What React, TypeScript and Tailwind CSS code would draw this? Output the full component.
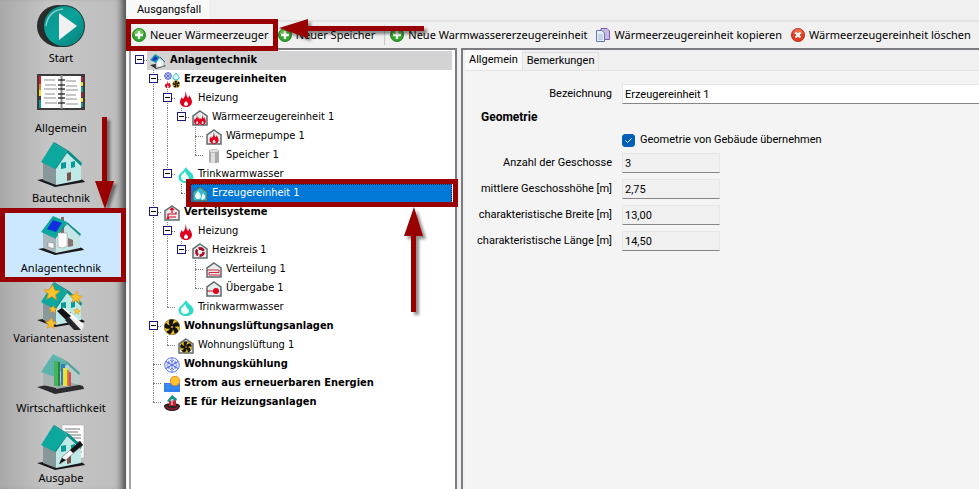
import { useState } from "react";
import type { ReactNode } from "react";

const UI = "font-['Noto_Sans','Open_Sans',sans-serif]";
const TREE = "font-['DejaVu_Sans_Condensed','DejaVu_Sans',sans-serif]";
const FORM = "font-['Roboto','Liberation_Sans',sans-serif]";

/* ---------- sidebar drawings ---------- */

function Big({ children }: { children: ReactNode }) {
  return (
    <svg viewBox="0 0 48 48" className="h-12 w-12 shrink-0" aria-hidden="true">
      {children}
    </svg>
  );
}

function House() {
  return (
    <g>
      <path d="M0 38 18 45 48 40 46 38 30 33Z" fill="#18181c" />
      <path d="M6 20 19 26V43L6 38Z" fill="#87979a" />
      <path d="M30 10 44 23V38L19 43V25Z" fill="#bfe9e7" />
      <path d="M16 1 30 9 18 27 4 20Z" fill="#0ca79d" />
      <path d="M16 1 17 0 32 9 45 21 44 24 30 11 19 27 18 26 30 9Z" fill="#0b8f88" />
      <path d="M24 21 29 20V26L24 27ZM34 20 38 19V25L34 26Z" fill="#079a94" />
      <path d="M30 31 34 30V38L30 39Z" fill="#7a5146" />
    </g>
  );
}

function StartIcon() {
  return (
    <Big>
      <defs>
        <linearGradient id="startFace" x1="0" y1="0" x2="1" y2="1">
          <stop offset="0" stopColor="#0d8f88" />
          <stop offset=".5" stopColor="#0aa39a" />
          <stop offset="1" stopColor="#087f79" />
        </linearGradient>
      </defs>
      <path d="M20 3C8 4 0 13 0 24S9 44 21 45L32 44V4Z" fill="#2b2b2b" />
      <ellipse cx="27" cy="24" rx="21" ry="21" fill="#1d3735" />
      <ellipse cx="27" cy="24" rx="20" ry="20" fill="url(#startFace)" />
      <path d="M9 24C10 14 17 8 26 7" fill="none" stroke="#7fd0cb" strokeWidth="1.500" />
      <path d="M22 11 40 24 22 38Z" fill="#f1f1f1" />
    </Big>
  );
}

function NotebookIcon() {
  const rows = [8, 13, 17, 22, 26, 31];
  return (
    <Big>
      <rect x="0" y="2" width="48" height="36" fill="#3c3c3e" />
      <rect x="4" y="4" width="20" height="32" fill="#fff" />
      <rect x="25" y="4" width="19" height="32" fill="#fff" />
      <path d="M2 4h2v8H2z" fill="#e21b2c" />
      <path d="M2 12h2v6H2z" fill="#f08228" />
      <path d="M2 18h2v6H2z" fill="#f4e11c" />
      <path d="M2 28h2v8H2zM44 15h2v5h-2z" fill="#10a090" />
      <path d="M44 5h2v4h-2z" fill="#e21b2c" />
      <path d="M44 10h2v4h-2zM44 26h2v4h-2z" fill="#f4e11c" />
      <path d="M44 21h2v4h-2z" fill="#c3162a" />
      <path d="M44 31h2v4h-2z" fill="#10a090" />
      <path d="M24.500 3V37" stroke="#888" strokeWidth="2" />
      {rows.map((y, i) => (
        <g key={y}>
          <path d={`M${7 + (i % 2)} ${y}H${18 + (i % 3)}M29 ${y + 1}H${39 + (i % 3)}`} stroke="#8d8d8d" strokeWidth="1" />
          <path d={`M21 ${y}H28`} stroke="#1f1f1f" strokeWidth="1.300" />
        </g>
      ))}
    </Big>
  );
}

function BuildingIcon() {
  return (
    <Big>
      <House />
    </Big>
  );
}

function PlantIcon() {
  return (
    <Big>
      <path d="M1 37 18 43 47 38 45 36 30 32Z" fill="#18181c" />
      <path d="M6 20 19 26V41L6 36Z" fill="#a9b9bd" />
      <path d="M30 11 43 22V36L19 41V24Z" fill="#c5e4e6" />
      <path d="M24 5h3v17h-3z" fill="#8a6a68" />
      <path d="M16 4 30 10 17 26 4 20Z" fill="#0ca79d" />
      <path d="M30 10 44 22 43 24 30 12 18 27 17 26Z" fill="#159089" />
      <path d="M16 8 25 11 19 20 10 17Z" fill="#1030e0" />
      <path d="M21 21h9v13l-4 2-5-1z" fill="#fff" stroke="#999" strokeWidth=".6" />
      <path d="M11 30 17 31V37L11 35Z" fill="#f4f4f4" stroke="#777" strokeWidth=".5" />
      <path d="M31 26 36 28V34L31 35Z" fill="#87706e" />
    </Big>
  );
}

function Star({ x, y, s }: { x: number; y: number; s: number }) {
  return (
    <path
      transform={`translate(${x} ${y}) scale(${s})`}
      d="M1-8 3-2 9-1 4 3 5 9 0 5-6 8-4 2-9-2-3-3Z"
      fill="#fbc22c"
      stroke="#d98c14"
      strokeWidth=".8"
    />
  );
}

function AssistantIcon() {
  return (
    <Big>
      <House />
      <path d="M21 29 26 26 47 44 45 48 37 47Z" fill="#ececec" />
      <path d="M26 26 46 43" stroke="#fff" strokeWidth="2" />
      <path d="M20 29 25 26 34 34 29 38Z" fill="#121216" />
      <path d="M28 38 37 48H44L32 35Z" fill="#26262a" />
      <Star x={15} y={10} s={0.900} />
      <Star x={39} y={15} s={0.700} />
      <Star x={16} y={27} s={0.450} />
      <Star x={40} y={29} s={0.400} />
      <Star x={14} y={41} s={0.650} />
    </Big>
  );
}

function EconomyIcon() {
  return (
    <Big>
      <path d="M0 35 18 42 47 37 46 34 28 29Z" fill="#2c2c30" />
      <path d="M6 20 19 24V36L6 33Z" fill="#a9b4b5" />
      <path d="M30 10 42 22V33L19 37V24Z" fill="#b4cdcc" opacity=".8" />
      <path d="M16 2 29 10 18 25 4 20Z" fill="#5cb5ad" />
      <path d="M17 2 31 10 43 21 42 23 30 12 18 25 29 10Z" fill="#4ba39b" />
      <path d="M17 9h4v25h-4z" fill="#46b45c" />
      <path d="M21 10h2v24h-2z" fill="#2c7f45" />
      <path d="M24 12h4v21h-4z" fill="#2c7fb8" />
      <path d="M26 16h4v18h-4z" fill="#ecdf3a" />
      <path d="M30 18h2v15h-2z" fill="#a99c2a" />
      <path d="M31 20h3v14h-3z" fill="#d56a50" />
      <path d="M32 21h2v13h-2z" fill="#e0455d" />
    </Big>
  );
}

function OutputIcon() {
  return (
    <Big>
      <path d="M25 3H47V36H25Z" fill="#fff" stroke="#aaa" strokeWidth=".6" />
      <path d="M28 7h15M28 10h13M30 13h14M34 16h10M38 20h6M40 30h5" stroke="#777" />
      <g transform="translate(0 3)">
        <House />
      </g>
      <path d="M43 20 46 23 29 38 23 42 25 35Z" fill="#f7f7f7" stroke="#555" strokeWidth=".5" />
      <path d="M43 19 46 23 36 31 33 28Z" fill="#141418" />
      <path d="M25 36 29 38 22 42Z" fill="#141418" />
    </Big>
  );
}

const NAV: { label: string; icon: ReactNode }[] = [
  { label: "Start", icon: <StartIcon /> },
  { label: "Allgemein", icon: <NotebookIcon /> },
  { label: "Bautechnik", icon: <BuildingIcon /> },
  { label: "Anlagentechnik", icon: <PlantIcon /> },
  { label: "Variantenassistent", icon: <AssistantIcon /> },
  { label: "Wirtschaftlichkeit", icon: <EconomyIcon /> },
  { label: "Ausgabe", icon: <OutputIcon /> },
];

/* ---------- small drawings ---------- */

function Small({ children }: { children: ReactNode }) {
  return (
    <svg viewBox="0 0 16 16" className="h-4 w-4 shrink-0" aria-hidden="true">
      {children}
    </svg>
  );
}

const FLAME =
  "M7 0C9 3 8 5 10 7 11 6 11 5 11 4 13 7 14 9 14 11 14 14 11 16 8 16S2 14 2 11C2 9 3 7 4 6 4 7 5 8 5 8 7 6 8 3 7 0ZM8 10C7 11 6 12 6 13S7 15 8 15 10 14 10 13 9 11 8 10Z";
const SHELL = "M8 1 15 6V15H1V6Z";

function Shell({ children }: { children?: ReactNode }) {
  return (
    <Small>
      <path d={SHELL} fill="#e9eded" stroke="#5f6b6d" strokeWidth="1.500" />
      {children}
    </Small>
  );
}

function FanDisc() {
  return (
    <g>
      <circle cx="8" cy="8" r="7.800" fill="#f2c31a" stroke="#3a3110" strokeWidth=".5" />
      <g fill="#15130c">
        {[0, 72, 144, 216, 288].map((a) => (
          <path key={a} transform={`rotate(${a} 8 8)`} d="M7 8C5 6 4 3 5.500 1 7.500 .2 9.500 .5 10 1.500 8.500 3 8.500 5 9 8Z" />
        ))}
      </g>
      <circle cx="8" cy="8" r="1" fill="#f2c31a" />
    </g>
  );
}

const ICONS: Record<string, ReactNode> = {
  plant: (
    <Small>
      <path d="M0 12 6 16 16 13 10 10Z" fill="#333" />
      <path d="M9 5 14 8V13L6 15V9Z" fill="#e4edf2" stroke="#7b8a93" strokeWidth=".5" />
      <path d="M5 1 10 4 6 10 0 7Z" fill="#159aa8" />
      <path d="M5 3 8 5 5 8 2 7Z" fill="#1438c8" />
      <path d="M10 4 15 9" stroke="#43626b" />
      <path d="M8 9h3v4H8z" fill="#fff" />
    </Small>
  ),
  sources: (
    <Small>
      <circle cx="4" cy="4" r="3.300" fill="none" stroke="#4b63d8" />
      <path d="M4 0V8M0 4H8M1 1 7 7M7 1 1 7" stroke="#4b63d8" strokeWidth=".8" />
      <path d="M12 1C13 3 15 4 15 5.500A3 2.500 0 0 1 9 5.500C9 4 11 3 12 1Z" fill="#d8fbfa" stroke="#2bc7c4" />
      <path transform="translate(0 8.500) scale(.48)" d={FLAME} fill="#e2001f" fillRule="evenodd" />
      <g transform="translate(8.500 8.500) scale(.46)">
        <FanDisc />
      </g>
    </Small>
  ),
  flame: (
    <Small>
      <path d={FLAME} fill="#e2001f" fillRule="evenodd" />
    </Small>
  ),
  heatUnit: (
    <Shell>
      <path transform="translate(1 4) scale(.52 .68)" d={FLAME} fill="#e2001f" fillRule="evenodd" />
      <path transform="translate(6.500 4) scale(.52 .68)" d={FLAME} fill="#e2001f" fillRule="evenodd" />
    </Shell>
  ),
  heatPump: (
    <Shell>
      <path transform="translate(2 3) scale(.76)" d={FLAME} fill="#e2001f" fillRule="evenodd" />
    </Shell>
  ),
  tank: (
    <Small>
      <path d="M3 3V14C3 15.500 13 15.500 13 14V3Z" fill="#a9a9a9" />
      <path d="M5 4H9V15H5Z" fill="#dedede" />
      <ellipse cx="8" cy="3" rx="5" ry="1.500" fill="#e6e6e6" stroke="#999" strokeWidth=".6" />
    </Small>
  ),
  drop: (
    <Small>
      <path d="M8 0C10 4 15.500 6 15.500 10.500 15.500 14 12 16 8 16S.5 14 .5 10C.5 7 6 4 8 0Z" fill="#2fdac6" />
      <path d="M7 4C8 8 11 9 11 11S9 14 7 14 3 13 3 10 6 7 7 4Z" fill="#f4ffff" />
    </Small>
  ),
  waterUnit: (
    <Small>
      <path d={SHELL} fill="#35b9c4" stroke="#4d6c74" strokeWidth="1.300" />
      <path
        d="M6 5C7 7 9 8 9 10A3 3 0 0 1 3 10C3 8 5 7 6 5ZM11 7C12 9 14 10 13 12A2.500 2.500 0 0 1 9 13C10 11 10 9 11 7Z"
        fill="#f2ffff"
      />
    </Small>
  ),
  distribution: (
    <Shell>
      <path d="M4 12V9H12V7M12 12H5M8 8V3M6 5 8 3 10 5" fill="none" stroke="#e2001f" strokeWidth="1.200" />
      <circle cx="4" cy="13" r="1.300" fill="#e2001f" />
    </Shell>
  ),
  circuit: (
    <Shell>
      <circle cx="8" cy="9" r="3.600" fill="none" stroke="#a80d24" strokeWidth="2.600" strokeDasharray="6 1.500" />
    </Shell>
  ),
  pipes: (
    <Shell>
      <path d="M1 8H13V10.500H3V13H15" fill="none" stroke="#d0283c" strokeWidth="1" />
    </Shell>
  ),
  handover: (
    <Shell>
      <path d="M1 10H9" stroke="#e2001f" />
      <circle cx="10" cy="10" r="3" fill="#e2001f" />
    </Shell>
  ),
  fan: (
    <Small>
      <FanDisc />
    </Small>
  ),
  fanHouse: (
    <Shell>
      <g transform="translate(2 3) scale(.75)">
        <FanDisc />
      </g>
    </Shell>
  ),
  snow: (
    <Small>
      <circle cx="8" cy="8" r="7.300" fill="#f4f6ff" stroke="#5b74e8" />
      {[0, 60, 120].map((a) => (
        <path
          key={a}
          transform={`rotate(${a} 8 8)`}
          d="M8 1V15M6 3 8 5 10 3M6 13 8 11 10 13"
          fill="none"
          stroke="#5b74e8"
          strokeWidth=".9"
        />
      ))}
    </Small>
  ),
  solar: (
    <Small>
      <rect x="0" y="7" width="16" height="9" fill="#2f80ee" />
      <path d="M0 9H8M0 12H16M4 7V16" stroke="#5c9cf4" strokeWidth=".5" />
      <circle cx="11" cy="5" r="4.700" fill="#fcc32e" stroke="#ee8a22" />
    </Small>
  ),
  renewable: (
    <Small>
      <path d="M0 11C0 7 16 7 16 11 16 14 12 16 8 16S0 14 0 11Z" fill="#2a2326" />
      <path d="M2 12C6 15 11 15 14 12" stroke="#9c1c30" strokeWidth="1.500" fill="none" />
      <path d="M5 6 12 5V11H5Z" fill="#c01f35" />
      <path d="M3 6 8 0 13 4 12 6 8 4 5 7Z" fill="#178f88" />
      <path d="M8 6V10" stroke="#fff" />
    </Small>
  ),
};

function PlusIcon() {
  return (
    <svg viewBox="0 0 14 14" className="h-3.5 w-3.5 shrink-0" aria-hidden="true">
      <circle cx="7" cy="7" r="6.600" fill="#2fa52a" stroke="#1f7a1c" strokeWidth=".8" />
      <path d="M2 6A5 5 0 0 1 12 6Z" fill="#7fd05f" opacity=".7" />
      <path d="M7 3V11M3 7H11" stroke="#fff" strokeWidth="2.400" />
    </svg>
  );
}

function CopyIcon() {
  return (
    <svg viewBox="0 0 14 14" className="h-3.5 w-3.5 shrink-0" aria-hidden="true">
      <path d="M5 .5H11L13.500 3V11.500H5Z" fill="#c9b8e4" stroke="#7d62a8" />
      <path d="M.5 2.500H6L8.500 5V13.500H.5Z" fill="#e7edf8" stroke="#6079b0" />
      <path d="M2 7H7M2 9H7M2 11H7" stroke="#a9b9dc" />
    </svg>
  );
}

function DeleteIcon() {
  return (
    <svg viewBox="0 0 14 14" className="h-3.5 w-3.5 shrink-0" aria-hidden="true">
      <circle cx="7" cy="7" r="6.600" fill="#e23a1e" stroke="#b32a14" strokeWidth=".8" />
      <path d="M2 6A5 5 0 0 1 12 6Z" fill="#f58a68" opacity=".6" />
      <path d="M4.500 4.500 9.500 9.500M9.500 4.500 4.500 9.500" stroke="#fff" strokeWidth="2.200" />
    </svg>
  );
}

function ToolButton({ icon, children }: { icon: ReactNode; children: ReactNode }) {
  return (
    <button type="button" className="flex items-center gap-1 whitespace-nowrap">
      {icon}
      {children}
    </button>
  );
}

/* ---------- tree ---------- */

type Node = { level: number; label: string; icon: string; bold?: boolean };

const NODES: Node[] = [
  { level: 0, label: "Anlagentechnik", icon: "plant", bold: true },
  { level: 1, label: "Erzeugereinheiten", icon: "sources", bold: true },
  { level: 2, label: "Heizung", icon: "flame" },
  { level: 3, label: "Wärmeerzeugereinheit 1", icon: "heatUnit" },
  { level: 4, label: "Wärmepumpe 1", icon: "heatPump" },
  { level: 4, label: "Speicher 1", icon: "tank" },
  { level: 2, label: "Trinkwarmwasser", icon: "drop" },
  { level: 3, label: "Erzeugereinheit 1", icon: "waterUnit" },
  { level: 1, label: "Verteilsysteme", icon: "distribution", bold: true },
  { level: 2, label: "Heizung", icon: "flame" },
  { level: 3, label: "Heizkreis 1", icon: "circuit" },
  { level: 4, label: "Verteilung 1", icon: "pipes" },
  { level: 4, label: "Übergabe 1", icon: "handover" },
  { level: 2, label: "Trinkwarmwasser", icon: "drop" },
  { level: 1, label: "Wohnungslüftungsanlagen", icon: "fan", bold: true },
  { level: 2, label: "Wohnungslüftung 1", icon: "fanHouse" },
  { level: 1, label: "Wohnungskühlung", icon: "snow", bold: true },
  { level: 1, label: "Strom aus erneuerbaren Energien", icon: "solar", bold: true },
  { level: 1, label: "EE für Heizungsanlagen", icon: "renewable", bold: true },
];

function continues(index: number, level: number) {
  for (const n of NODES.slice(index + 1)) {
    if (n.level < level) return false;
    if (n.level === level) return true;
  }
  return false;
}

function TreeRow({ index, selected, onSelect }: { index: number; selected: boolean; onSelect: () => void }) {
  const node = NODES[index];
  const expandable = (NODES[index + 1]?.level ?? 0) > node.level;
  const below = continues(index, node.level);
  return (
    <li role="treeitem" aria-level={node.level + 1} aria-selected={selected} className="flex h-[19px]">
      {Array.from({ length: node.level }, (_, k) => (
        <span key={k} className="flex w-3.5 shrink-0 pl-1.5">
          {k > 0 && continues(index, k) && <span className="border-l border-dotted border-[#808080]" />}
        </span>
      ))}
      <span className="relative flex w-3.5 shrink-0 flex-col pl-1.5">
        <span className={`h-[9px] ${node.level > 0 ? "border-l border-dotted border-[#808080]" : ""}`} />
        <span className="border-t border-dotted border-[#808080]" />
        <span className={`h-[9px] ${below ? "border-l border-dotted border-[#808080]" : ""}`} />
        {expandable && (
          <button
            type="button"
            aria-label={`${node.label} einklappen`}
            className="absolute top-1 left-0.5 flex h-[9px] w-[9px] items-center justify-center border border-[#1a1a80] bg-white"
          >
            <span className="h-px w-[5px] bg-black" />
          </button>
        )}
      </span>
      <button
        type="button"
        onClick={onSelect}
        className={`flex min-w-0 items-center gap-1 pl-[3px] text-left whitespace-nowrap ${node.bold ? "font-bold" : ""} ${
          selected
            ? "flex-1 bg-[#0078d7] text-white outline-1 -outline-offset-1 outline-dotted outline-[#10243a]"
            : node.level === 0
              ? "flex-1 bg-[#d3d3d3]"
              : ""
        }`}
      >
        {ICONS[node.icon]}
        {node.label}
      </button>
    </li>
  );
}

/* ---------- form ---------- */

const FIELDS = [
  { id: "floors", label: "Anzahl der Geschosse", value: "3" },
  { id: "height", label: "mittlere Geschosshöhe [m]", value: "2,75" },
  { id: "width", label: "charakteristische Breite [m]", value: "13,00" },
  { id: "length", label: "charakteristische Länge [m]", value: "14,50" },
];

const BOX = "h-5 border border-[#e6e6e6] border-b-[#868686] px-0.5 outline-none";

/* ---------- callouts ---------- */

function Callouts() {
  return (
    <svg
      width="460"
      height="320"
      viewBox="0 0 460 320"
      className="pointer-events-none absolute top-0 left-0"
      aria-hidden="true"
    >
      <defs>
        <filter id="calloutShadow" x="-50%" y="-50%" width="200%" height="200%">
          <feDropShadow dx="3" dy="3" stdDeviation="1.500" floodColor="#000" floodOpacity=".45" />
        </filter>
      </defs>
      <path d="M102 117H107V181H114L105 209 95 181H102Z" fill="#990000" filter="url(#calloutShadow)" />
      <path d="M424 26V31H308V38L279 28 308 19V26Z" fill="#990000" filter="url(#calloutShadow)" />
      <path d="M411 312H416V236H423L414 207 404 236H411Z" fill="#990000" filter="url(#calloutShadow)" />
      <g fill="none" stroke="#990000" strokeWidth="5">
        <rect x="2.500" y="210.500" width="121" height="69" />
        <rect x="128.500" y="21.500" width="147" height="27" />
        <rect x="188.500" y="181.500" width="267" height="23" />
      </g>
    </svg>
  );
}

export default function App() {
  const [selected, setSelected] = useState(7);
  const [nav, setNav] = useState(3);
  const [inherit, setInherit] = useState(true);
  const [name, setName] = useState("Erzeugereinheit 1");

  return (
    <div className={`relative flex h-screen overflow-hidden bg-[#f0f0f0] text-[11px] text-black ${UI}`}>
      <nav className="flex w-[126px] shrink-0 flex-col gap-1 bg-linear-to-r from-[#a9a9a9] via-[#c6c6c6] via-40% to-[#bdbdbd] px-[5px] pt-0.5 shadow-[inset_-9px_0_7px_-5px_#4a4a4a]">
        {NAV.map((item, i) => (
          <button
            key={item.label}
            type="button"
            onClick={() => setNav(i)}
            className={`flex h-[66px] shrink-0 flex-col items-center pr-1 whitespace-nowrap ${
              nav === i ? "border-b border-[#99d1ff] bg-[#cce8ff]" : ""
            }`}
          >
            {item.icon}
            <span className="leading-4">{item.label}</span>
          </button>
        ))}
      </nav>

      <main className="flex min-w-0 flex-1 flex-col border-l-3 border-[#f8f8f8]">
        <div className={`flex h-[22px] shrink-0 items-start border-b-2 border-[#e3e3e3] ${FORM}`} role="tablist">
          <button type="button" role="tab" aria-selected="true" className="h-5 bg-[#f9f9f9] px-2">
            Ausgangsfall
          </button>
        </div>

        <div className="flex h-[26px] shrink-0 items-center gap-[9px] pl-[3px]" role="toolbar">
          <ToolButton icon={<PlusIcon />}>Neuer Wärmeerzeuger</ToolButton>
          <ToolButton icon={<PlusIcon />}>Neuer Speicher</ToolButton>
          <span className="-mr-1 h-5 w-px bg-[#c8c8c8]" />
          <ToolButton icon={<PlusIcon />}>Neue Warmwassererzeugereinheit</ToolButton>
          <ToolButton icon={<CopyIcon />}>Wärmeerzeugereinheit kopieren</ToolButton>
          <ToolButton icon={<DeleteIcon />}>Wärmeerzeugereinheit löschen</ToolButton>
        </div>

        <div className="flex min-h-0 flex-1 gap-1">
          <ul
            role="tree"
            className={`w-[328px] shrink-0 overflow-hidden border-2 border-b-0 border-[#7c7c80] border-l-[#a0a0a4] bg-white pt-px pr-[3px] pl-0.5 ${TREE}`}
          >
            {NODES.map((_, i) => (
              <TreeRow key={i} index={i} selected={selected === i} onSelect={() => setSelected(i)} />
            ))}
          </ul>

          <section className={`flex min-w-0 flex-1 flex-col border-t-2 border-l-2 border-[#7c7c80] pl-0.5 ${FORM}`}>
            <div role="tablist" className="flex items-end">
              <button type="button" role="tab" aria-selected="true" className="h-5 bg-[#f9f9f9] px-1">
                Allgemein
              </button>
              <button type="button" role="tab" aria-selected="false" className="h-[18px] border border-b-0 border-[#e0e0e0] px-1">
                Bemerkungen
              </button>
            </div>
            <form className="flex-1 border-t border-[#e3e3e3] bg-[#f4f4f4] pt-[13px] pl-3">
              <div className="flex items-center gap-2.5">
                <label htmlFor="name" className="w-[135px] shrink-0 text-right">
                  Bezeichnung
                </label>
                <input
                  id="name"
                  value={name}
                  onChange={(e) => setName(e.target.value)}
                  className={`min-w-0 flex-1 border-r-0 bg-white ${BOX}`}
                />
              </div>
              <h2 className="pl-1 text-xs leading-[26px] font-bold">Geometrie</h2>
              <label className="mb-[3px] ml-[145px] flex h-5 items-center gap-[5px]">
                <span className="relative flex h-[13px] w-[13px]">
                  <input
                    type="checkbox"
                    checked={inherit}
                    onChange={(e) => setInherit(e.target.checked)}
                    className="peer h-[13px] w-[13px] appearance-none rounded-[3px] border border-[#868686] bg-white checked:border-[#005fb8] checked:bg-[#005fb8]"
                  />
                  <svg viewBox="0 0 13 13" className="pointer-events-none absolute inset-0 hidden peer-checked:block" aria-hidden="true">
                    <path d="M3.500 6.500 5.500 8.500 9.500 4.500" fill="none" stroke="#fff" />
                  </svg>
                </span>
                Geometrie von Gebäude übernehmen
              </label>
              <div className="flex flex-col gap-1.5">
                {FIELDS.map((f) => (
                  <div key={f.id} className="flex items-center gap-2.5">
                    <label htmlFor={f.id} className="w-[135px] shrink-0 text-right whitespace-nowrap">
                      {f.label}
                    </label>
                    <input id={f.id} value={f.value} readOnly className={`w-[98px] bg-[#f0f0f0] ${BOX}`} />
                  </div>
                ))}
              </div>
            </form>
          </section>
        </div>
      </main>

      <Callouts />
    </div>
  );
}
